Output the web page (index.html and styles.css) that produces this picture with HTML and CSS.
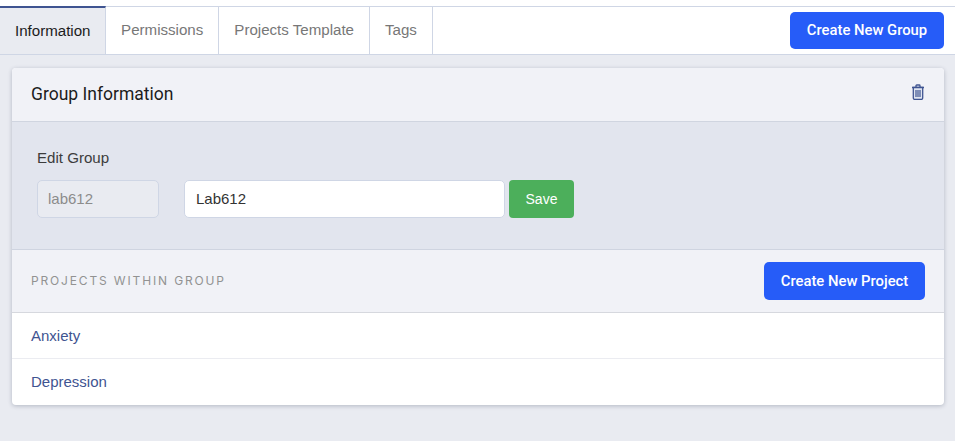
FILE: index.html
```html
<!DOCTYPE html>
<html lang="en">
<head>
<meta charset="utf-8">
<title>Group Information</title>
<link rel="stylesheet" href="styles.css">
</head>
<body>
<div class="topbar"></div>
<nav class="tabs">
  <a class="tab tab-active">Information</a>
  <a class="tab">Permissions</a>
  <a class="tab">Projects Template</a>
  <a class="tab">Tags</a>
  <button class="btn btn-top">Create New Group</button>
</nav>
<main class="content">
  <section class="card">
    <header class="card-head">
      <h2>Group Information</h2>
      <svg class="trash" viewBox="0 0 14 16" width="14" height="16" aria-hidden="true">
        <path d="M1 3.5h12M5 3.2V1.7c0-.4.3-.7.7-.7h2.6c.4 0 .7.3.7.7v1.5" fill="none" stroke="#3f5491" stroke-width="1.3"/>
        <path d="M2.3 3.5h9.4v10.6c0 .8-.6 1.3-1.3 1.3H3.6c-.7 0-1.3-.5-1.3-1.3z" fill="#dfe4f0" stroke="#3f5491" stroke-width="1.3"/>
        <path d="M5 6v7M7 6v7M9 6v7" fill="none" stroke="#3f5491" stroke-width="1.2"/>
      </svg>
    </header>
    <div class="edit">
      <label class="edit-label">Edit Group</label>
      <div class="edit-row">
        <input class="field field-id" value="lab612" disabled>
        <input class="field field-name" value="Lab612">
        <button class="btn-save">Save</button>
      </div>
    </div>
    <div class="projects-head">
      <span class="projects-title">PROJECTS WITHIN GROUP</span>
      <button class="btn btn-project">Create New Project</button>
    </div>
    <ul class="project-list">
      <li><a>Anxiety</a></li>
      <li><a>Depression</a></li>
    </ul>
  </section>
</main>
</body>
</html>
```
FILE: styles.css
```css
* { box-sizing: border-box; }
html, body { height: 100%; }
body {
  margin: 0;
  background: #e9ebf1;
  font-family: "Liberation Sans", Arial, sans-serif;
  overflow: hidden;
}
.topbar { height: 7px; background: #fff; border-bottom: 1px solid #cfd6e5; }
.tabs {
  height: 48px;
  display: flex;
  align-items: stretch;
  background: #fff;
  border-bottom: 1px solid #cfd6e5;
}
.tab {
  display: flex;
  align-items: center;
  padding: 0 15px 2px;
  height: 47px;
  font-size: 15.1px;
  color: #777;
  border-right: 1px solid #cfd6e5;
}
.tab-active {
  color: #1c1c1c;
  background: #e9ebf1;
  height: 48px;
  margin-top: -1px;
  border-top: 2px solid #3f5491;
  padding-right: 14.6px;
}
.btn {
  border: 0;
  border-radius: 5px;
  background: #265cf8;
  color: #fff;
  font-family: Roboto, sans-serif;
  font-size: 14.8px;
  font-weight: 500;
  height: 37px;
  padding: 0 0 1px;
}
.btn-top { width: 154px; margin: 5px 11px 0 auto; }
.content { padding: 13px 11px 0 12px; }
.card {
  background: #fff;
  border-radius: 4px;
  box-shadow: 0 1px 4px rgba(40, 50, 80, .28);
  overflow: hidden;
}
.card-head {
  height: 54px;
  display: flex;
  align-items: center;
  justify-content: space-between;
  padding: 0 19px 2px;
  background: #f1f2f7;
  border-bottom: 1px solid #d0d5e0;
}
.card-head h2 {
  margin: 0;
  font-family: Roboto, sans-serif;
  font-size: 17.5px;
  font-weight: 400;
  color: #1c1c1c;
}
.trash { display: block; margin-top: -3px; }
.edit {
  height: 128px;
  padding: 27px 25px 0;
  background: #e2e5ee;
  border-bottom: 1px solid #cfd4e0;
}
.edit-label { display: block; font-size: 15.1px; color: #3c3c3c; line-height: 17px; }
.edit-row { display: flex; align-items: center; margin-top: 14px; }
.field {
  height: 38px;
  border: 1px solid #cfd6e5;
  border-radius: 5px;
  padding: 0 10px 1px;
  font-family: "Liberation Sans", Arial, sans-serif;
  font-size: 15px;
  color: #333;
  background: #fff;
}
.field-id { width: 122px; margin-right: 25px; background: #e9ebf1; color: #8c8c8c; }
.field-name { width: 321px; margin-right: 4px; padding-left: 11px; }
.btn-save {
  width: 65px;
  height: 38px;
  border: 0;
  border-radius: 4px;
  background: #4caf5b;
  color: #fff;
  font-family: "Liberation Sans", Arial, sans-serif;
  font-size: 14px;
  font-weight: 400;
  padding: 0;
}
.projects-head {
  height: 63px;
  display: flex;
  align-items: center;
  justify-content: space-between;
  padding: 0 19px;
  background: #f1f2f7;
  border-bottom: 1px solid #d6d8de;
}
.projects-title {
  font-family: Inter, sans-serif;
  font-size: 12px;
  letter-spacing: 1.85px;
  color: #929292;
  margin-top: -1px;
}
.btn-project { width: 161px; height: 38px; }
.project-list { list-style: none; margin: 0; padding: 0; }
.project-list li {
  height: 46px;
  display: flex;
  align-items: center;
  padding: 0 19px;
  font-size: 15px;
  color: #3f5491;
  border-bottom: 1px solid #ebecf1;
}
.project-list li:last-child { border-bottom: 0; padding-bottom: 1px; }
```
